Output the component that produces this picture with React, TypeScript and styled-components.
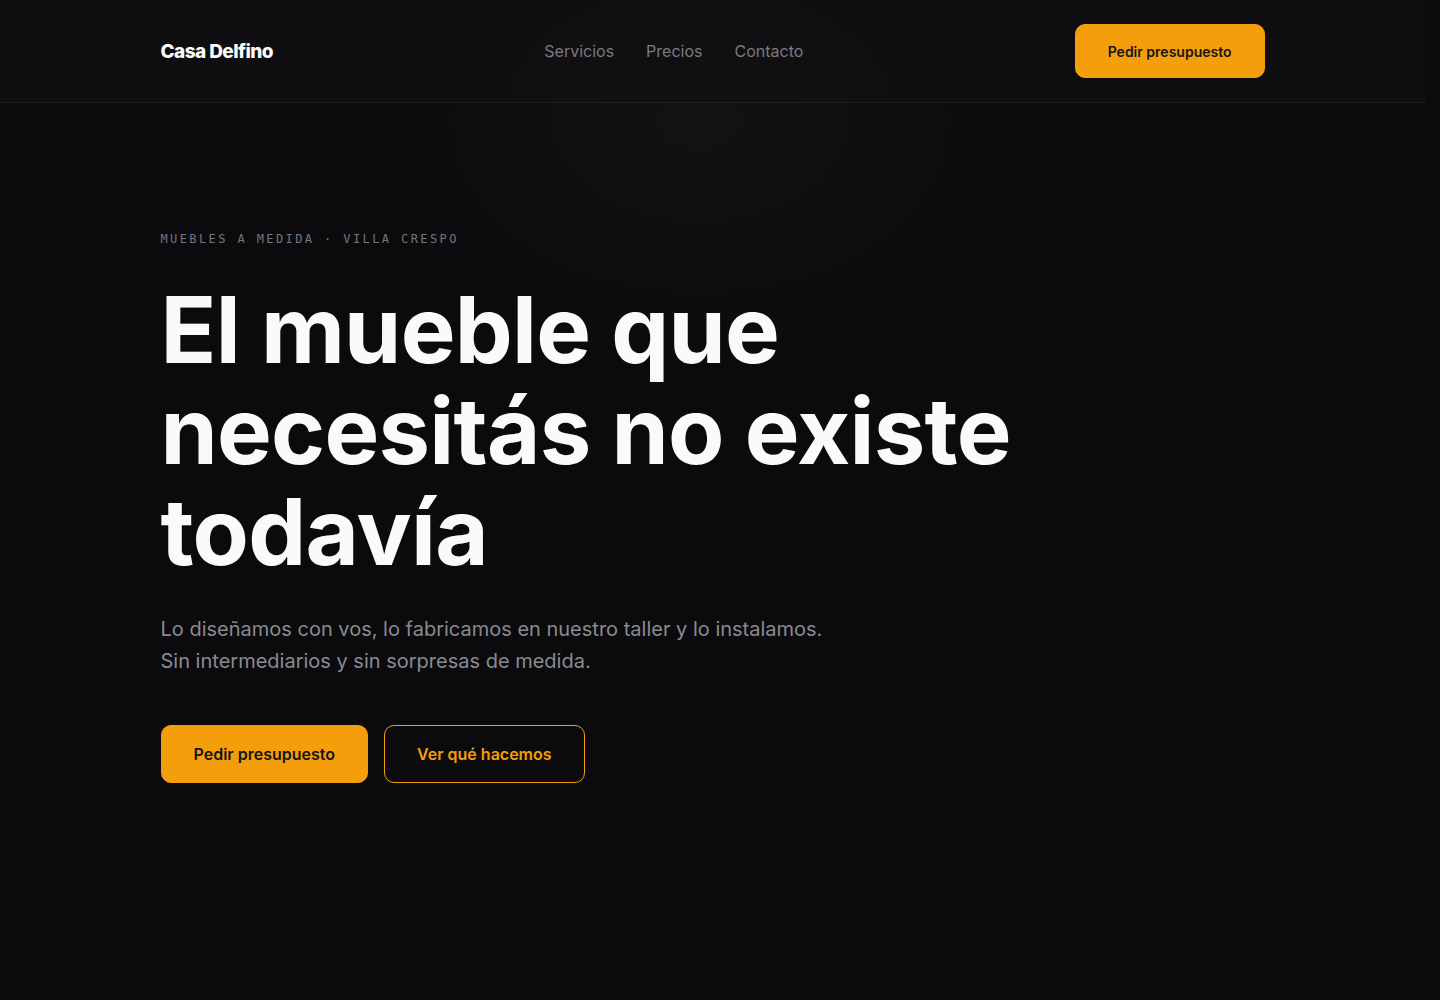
import styled, { createGlobalStyle } from 'styled-components'

const GlobalStyle = createGlobalStyle`
html {
  color-scheme: dark;
  background: #0b0b0e;
}
body {
  margin: 0;
  padding-right: 15px;
  background: #0b0b0e;
  color: #f5f5f4;
  font-family: Inter, "Liberation Sans", sans-serif;
  -webkit-font-smoothing: antialiased;
}
* { box-sizing: border-box; }
a { color: inherit; text-decoration: none; }
`

const Page = styled.div`
min-height: 100vh;
background:
  radial-gradient(ellipse 520px 360px at 700px 120px, rgba(255, 255, 255, 0.03), transparent 70%),
  #0b0b0e;
`

const Container = styled.div`
max-width: 1200px;
margin: 0 auto;
padding: 0 48px;
`

const Header = styled.header`
border-bottom: 1px solid #1f1f23;
background: rgba(16, 16, 19, 0.6);
`

const HeaderInner = styled(Container)`
height: 102px;
display: flex;
justify-content: space-between;
align-items: center;
`

const Logo = styled.a`
font-size: 19px;
font-weight: 800;
letter-spacing: -0.03em;
color: #fafafa;
`

const Nav = styled.nav`
display: flex;
gap: 32px;
`

const NavLink = styled.a`
font-size: 16px;
color: #7a7a80;
`

const Button = styled.a<{ $variant?: 'solid' | 'outline'; $size?: 'sm' | 'lg' }>`
display: inline-flex;
align-items: center;
justify-content: center;
height: ${(p) => (p.$size === 'sm' ? '54px' : '58px')};
padding: 0 32px;
border-radius: 10px;
font-size: ${(p) => (p.$size === 'sm' ? '14px' : '16px')};
font-weight: 600;
background: ${(p) => (p.$variant === 'outline' ? 'transparent' : '#f59e0b')};
color: ${(p) => (p.$variant === 'outline' ? '#f59e0b' : '#151515')};
border: 1px solid #f59e0b;
`

const Hero = styled.section`
padding: 128px 0 280px;
`

const Eyebrow = styled.p`
margin: 0;
font-family: "DejaVu Sans Mono", "Liberation Mono", monospace;
font-size: 12px;
line-height: 16px;
letter-spacing: 0.2em;
color: #75757b;
`

const Title = styled.h1`
margin: 32px 0 0;
max-width: 900px;
font-size: 92px;
line-height: 101px;
font-weight: 700;
letter-spacing: -0.008em;
color: #fafafa;
`

const Lead = styled.p`
margin: 31px 0 0;
max-width: 680px;
font-size: 20px;
line-height: 32px;
color: #8a8a90;
`

const Actions = styled.div`
display: flex;
gap: 16px;
margin-top: 48px;
`

const Section = styled.section`
padding: 140px 0;
border-top: 1px solid #18181c;
`

const SectionLabel = styled(Eyebrow)`
margin-bottom: 24px;
`

const SectionTitle = styled.h2`
margin: 0 0 56px;
font-size: 56px;
line-height: 1.1;
font-weight: 700;
letter-spacing: -0.02em;
max-width: 760px;
`

const CardGrid = styled.div`
display: grid;
grid-template-columns: repeat(3, 1fr);
gap: 24px;
`

const Card = styled.div`
padding: 40px 32px;
min-height: 340px;
border: 1px solid #1f1f24;
border-radius: 16px;
background: #111114;
display: flex;
flex-direction: column;
gap: 16px;
`

const CardTitle = styled.h3`
margin: 0;
font-size: 24px;
font-weight: 600;
letter-spacing: -0.02em;
`

const CardText = styled.p`
margin: 0;
font-size: 16px;
line-height: 26px;
color: #8a8a90;
`

const Price = styled.div`
font-size: 40px;
font-weight: 700;
letter-spacing: -0.03em;
color: #f59e0b;
`

const Footer = styled.footer`
padding: 64px 0;
border-top: 1px solid #18181c;
color: #6f6f75;
font-size: 14px;
`

const services = [
  { title: 'Placards y vestidores', text: 'Interiores pensados para lo que guardás, con herrajes de cierre suave.' },
  { title: 'Cocinas', text: 'Bajo mesadas, alacenas y torres a medida, en melamina o laqueado.' },
  { title: 'Bibliotecas y racks', text: 'Muebles de living que aprovechan cada centímetro de la pared.' },
]

const prices = [
  { title: 'Relevamiento', price: 'Sin cargo', text: 'Vamos a tu casa, medimos y charlamos qué necesitás.' },
  { title: 'Diseño', price: 'Incluido', text: 'Te mandamos planos y render antes de fabricar.' },
  { title: 'Instalación', price: 'Incluida', text: 'Entregamos e instalamos en CABA sin costo extra.' },
]

export default function App() {
  return (
    <>
      <GlobalStyle />
      <Page>
        <Header>
          <HeaderInner>
            <Logo href="#">Casa Delfino</Logo>
            <Nav>
              <NavLink href="#servicios">Servicios</NavLink>
              <NavLink href="#precios">Precios</NavLink>
              <NavLink href="#contacto">Contacto</NavLink>
            </Nav>
            <Button $size="sm" href="#contacto">Pedir presupuesto</Button>
          </HeaderInner>
        </Header>

        <Container>
          <Hero>
            <Eyebrow>MUEBLES A MEDIDA · VILLA CRESPO</Eyebrow>
            <Title>El mueble que necesitás no existe todavía</Title>
            <Lead>
              Lo diseñamos con vos, lo fabricamos en nuestro taller y lo instalamos.
              <br />
              Sin intermediarios y sin sorpresas de medida.
            </Lead>
            <Actions>
              <Button href="#contacto">Pedir presupuesto</Button>
              <Button $variant="outline" href="#servicios">Ver qué hacemos</Button>
            </Actions>
          </Hero>
        </Container>

        <Section id="servicios">
          <Container>
            <SectionLabel>SERVICIOS</SectionLabel>
            <SectionTitle>Todo lo que se guarda, se apoya o se cuelga</SectionTitle>
            <CardGrid>
              {services.map((s) => (
                <Card key={s.title}>
                  <CardTitle>{s.title}</CardTitle>
                  <CardText>{s.text}</CardText>
                </Card>
              ))}
            </CardGrid>
          </Container>
        </Section>

        <Section id="precios">
          <Container>
            <SectionLabel>PRECIOS</SectionLabel>
            <SectionTitle>Sabés cuánto cuesta antes de empezar</SectionTitle>
            <CardGrid>
              {prices.map((p) => (
                <Card key={p.title}>
                  <CardTitle>{p.title}</CardTitle>
                  <Price>{p.price}</Price>
                  <CardText>{p.text}</CardText>
                </Card>
              ))}
            </CardGrid>
          </Container>
        </Section>

        <Section id="contacto">
          <Container>
            <SectionLabel>CONTACTO</SectionLabel>
            <SectionTitle>Contanos qué querés armar</SectionTitle>
            <Actions>
              <Button href="#">Pedir presupuesto</Button>
            </Actions>
          </Container>
        </Section>

        <Footer>
          <Container>Casa Delfino · Villa Crespo, Buenos Aires</Container>
        </Footer>
      </Page>
    </>
  )
}
